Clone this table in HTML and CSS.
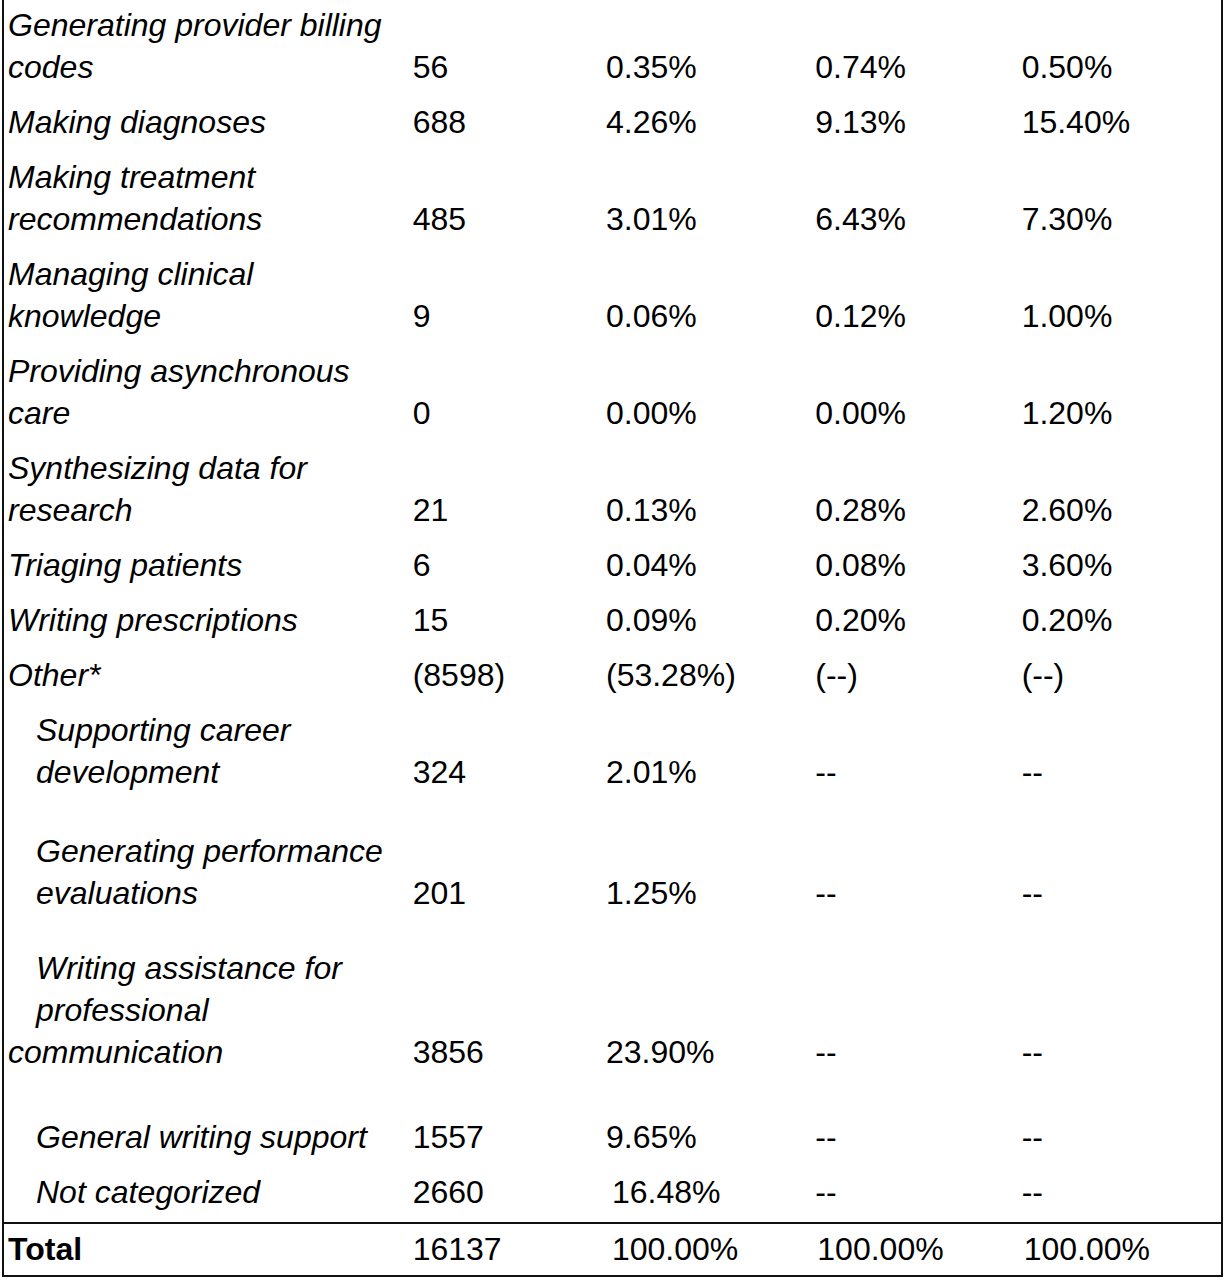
FILE: index.html
```html
<!DOCTYPE html>
<html lang="en">
<head>
  <meta charset="UTF-8" />
  <meta name="viewport" content="width=device-width, initial-scale=1.0"/>
  <title>Use cases table</title>
  <link rel="stylesheet" href="styles.css">
</head>
<body>
  <table class="usage">
    <colgroup>
      <col class="c-label">
      <col class="c-count">
      <col class="c-pct">
      <col class="c-a">
      <col class="c-b">
    </colgroup>
    <tbody>
      <tr>
        <td class="label">Generating provider billing<br>codes</td>
        <td>56</td><td>0.35%</td><td>0.74%</td><td>0.50%</td>
      </tr>
      <tr>
        <td class="label">Making diagnoses</td>
        <td>688</td><td>4.26%</td><td>9.13%</td><td>15.40%</td>
      </tr>
      <tr>
        <td class="label">Making treatment<br>recommendations</td>
        <td>485</td><td>3.01%</td><td>6.43%</td><td>7.30%</td>
      </tr>
      <tr>
        <td class="label">Managing clinical<br>knowledge</td>
        <td>9</td><td>0.06%</td><td>0.12%</td><td>1.00%</td>
      </tr>
      <tr>
        <td class="label">Providing asynchronous<br>care</td>
        <td>0</td><td>0.00%</td><td>0.00%</td><td>1.20%</td>
      </tr>
      <tr>
        <td class="label">Synthesizing data for<br>research</td>
        <td>21</td><td>0.13%</td><td>0.28%</td><td>2.60%</td>
      </tr>
      <tr>
        <td class="label">Triaging patients</td>
        <td>6</td><td>0.04%</td><td>0.08%</td><td>3.60%</td>
      </tr>
      <tr>
        <td class="label">Writing prescriptions</td>
        <td>15</td><td>0.09%</td><td>0.20%</td><td>0.20%</td>
      </tr>
      <tr>
        <td class="label">Other*</td>
        <td>(8598)</td><td>(53.28%)</td><td>(--)</td><td>(--)</td>
      </tr>

      <!-- breakdown of "Other" -->
      <tr class="gap-24">
        <td class="label"><span class="sub">Supporting career</span><span class="sub">development</span></td>
        <td>324</td><td>2.01%</td><td>--</td><td>--</td>
      </tr>
      <tr class="gap-20">
        <td class="label"><span class="sub">Generating performance</span><span class="sub">evaluations</span></td>
        <td>201</td><td>1.25%</td><td>--</td><td>--</td>
      </tr>
      <tr class="gap-30">
        <td class="label"><span class="sub">Writing assistance for</span><span class="sub">professional</span><span class="line">communication</span></td>
        <td>3856</td><td>23.90%</td><td>--</td><td>--</td>
      </tr>
      <tr>
        <td class="label"><span class="sub">General writing support</span></td>
        <td>1557</td><td>9.65%</td><td>--</td><td>--</td>
      </tr>
      <tr>
        <td class="label"><span class="sub">Not categorized</span></td>
        <td>2660</td><td><span class="nudge">16.48%</span></td><td>--</td><td>--</td>
      </tr>

      <tr class="total">
        <td class="label">Total</td>
        <td>16137</td>
        <td><span class="nudge">100.00%</span></td>
        <td><span class="nudge-sm">100.00%</span></td>
        <td><span class="nudge-sm">100.00%</span></td>
      </tr>
    </tbody>
  </table>
</body>
</html>
```

FILE: styles.css
```css
* {
  box-sizing: border-box;
  margin: 0;
  padding: 0;
}

body {
  background: #fff;
  color: #000;
  font-family: "Liberation Sans", Arial, sans-serif;
  font-size: 32px;
  line-height: 42px;
}

.usage {
  width: 1221px;
  margin-left: 2px;
  border-collapse: collapse;
  table-layout: fixed;
  border-left: 2px solid #111;
  border-right: 2px solid #111;
  border-bottom: 2px solid #111;
}

.c-label { width: 405px; }
.c-count { width: 193px; }
.c-pct { width: 209px; }
.c-a { width: 206px; }
.c-b { width: 204px; }

.usage td {
  padding: 4px 4px 9px;
  vertical-align: bottom;
  white-space: nowrap;
}

.label {
  font-style: italic;
}

.sub {
  display: block;
  padding-left: 28px;
}

.line {
  display: block;
}

.gap-24 td { padding-bottom: 33px; }
.gap-20 td { padding-bottom: 29px; }
.gap-30 td { padding-bottom: 39px; }

.nudge { margin-left: 6px; }
.nudge-sm { margin-left: 2px; }

.total td {
  border-top: 2px solid #111;
  padding-top: 4px;
  padding-bottom: 5px;
}

.total .label {
  font-style: normal;
  font-weight: bold;
}
```
